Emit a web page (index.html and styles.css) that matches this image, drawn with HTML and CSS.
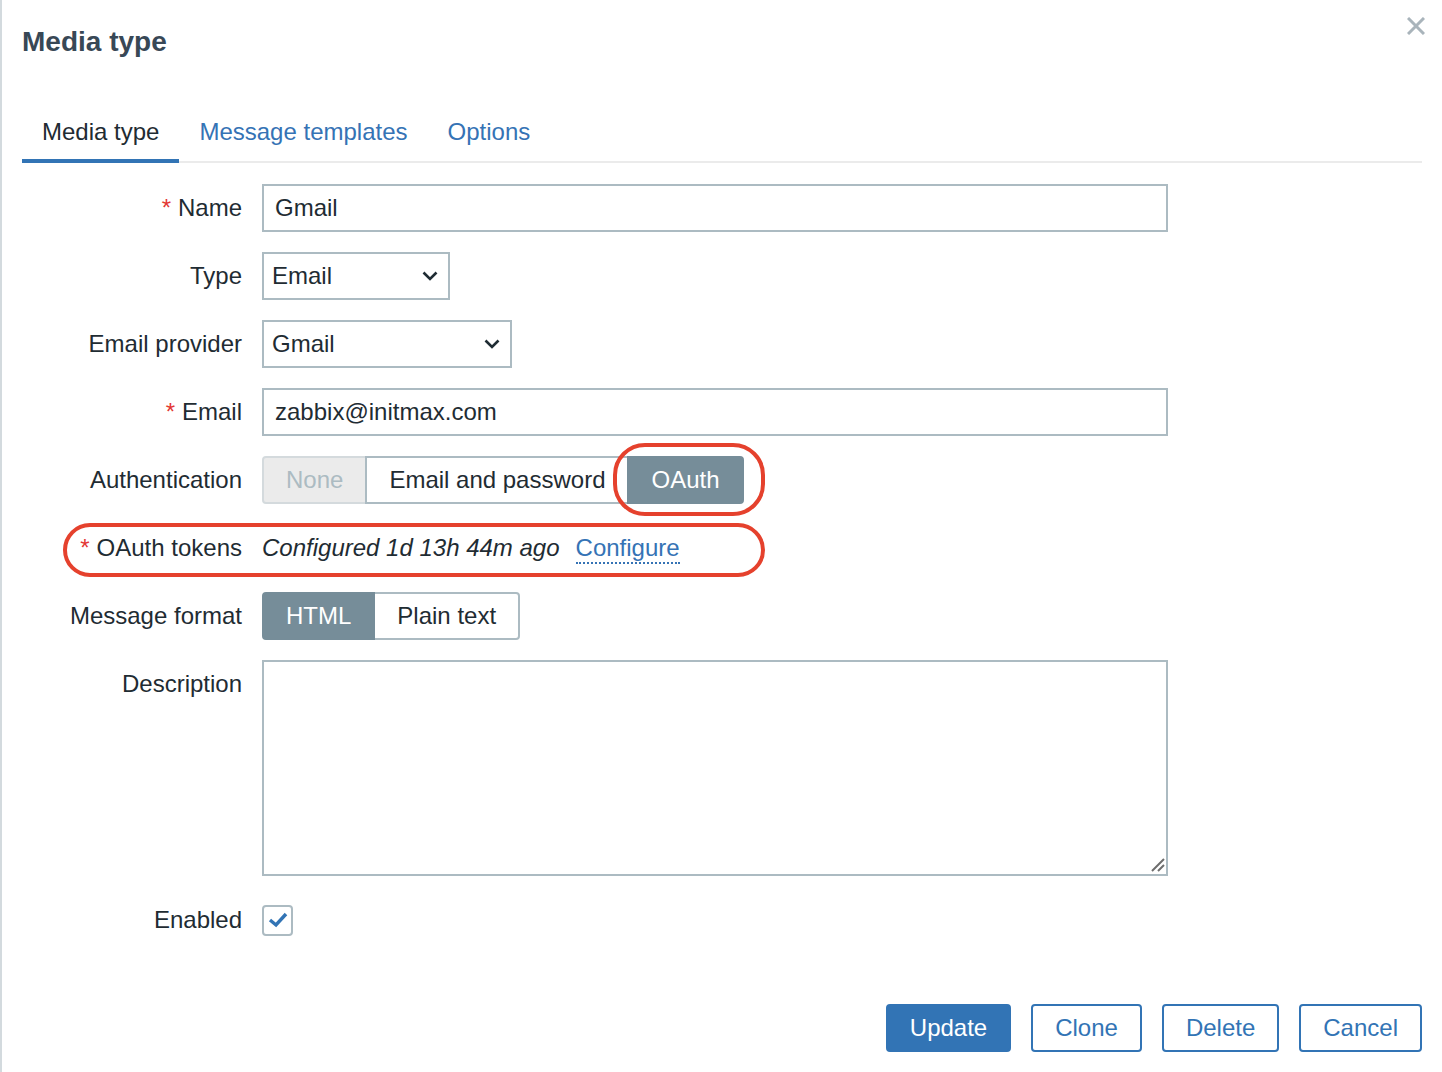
FILE: index.html
```html
<!DOCTYPE html>
<html lang="en">
<head>
    <meta charset="UTF-8">
    <meta name="viewport" content="width=device-width, initial-scale=1.0">
    <title>Media type</title>
    <link rel="stylesheet" href="styles.css">
</head>
<body>

<div class="dialog">
    <div class="dialog-head">
        <h1>Media type</h1>
        <button class="btn-close" type="button" title="Close">
            <svg width="18" height="18" viewBox="0 0 18 18">
                <path d="M1 1 L17 17 M17 1 L1 17" stroke="#a9b4bb" stroke-width="3" fill="none"/>
            </svg>
        </button>
    </div>

    <ul class="tabs">
        <li class="active">Media type</li>
        <li><a href="#">Message templates</a></li>
        <li><a href="#">Options</a></li>
    </ul>

    <form class="form-grid">
        <label class="required">Name</label>
        <div><input class="text-input" type="text" value="Gmail"></div>

        <label>Type</label>
        <div>
            <div class="select select-type">
                <span>Email</span>
                <svg width="16" height="10" viewBox="0 0 16 10"><polyline points="1.5,1.5 8,8 14.5,1.5" stroke="#1f2c33" stroke-width="2.6" fill="none"/></svg>
            </div>
        </div>

        <label>Email provider</label>
        <div>
            <div class="select select-provider">
                <span>Gmail</span>
                <svg width="16" height="10" viewBox="0 0 16 10"><polyline points="1.5,1.5 8,8 14.5,1.5" stroke="#1f2c33" stroke-width="2.6" fill="none"/></svg>
            </div>
        </div>

        <label class="required">Email</label>
        <div><input class="text-input" type="text" value="zabbix@initmax.com"></div>

        <label>Authentication</label>
        <div>
            <ul class="radio-list">
                <li class="disabled">None</li>
                <li>Email and password</li>
                <li class="checked">OAuth</li>
            </ul>
        </div>

        <label class="required">OAuth tokens</label>
        <div class="token-info">
            <em>Configured 1d 13h 44m ago</em>
            <a href="#" class="link-action">Configure</a>
        </div>

        <label>Message format</label>
        <div>
            <ul class="radio-list">
                <li class="checked">HTML</li>
                <li>Plain text</li>
            </ul>
        </div>

        <label>Description</label>
        <div class="area-wrap">
            <textarea class="text-area"></textarea>
            <svg class="grip" width="14" height="14" viewBox="0 0 14 14">
                <path d="M1 13 L13 1 M7 13 L13 7" stroke="#6e6e6e" stroke-width="2" fill="none"/>
            </svg>
        </div>

        <label>Enabled</label>
        <div class="check-cell">
            <span class="checkbox">
                <svg width="20" height="16" viewBox="0 0 20 16"><polyline points="2,8 8,13 18,2" stroke="#3274b5" stroke-width="3.4" fill="none"/></svg>
            </span>
        </div>
    </form>

    <div class="dialog-footer">
        <button type="button" class="btn btn-main">Update</button>
        <button type="button" class="btn btn-alt">Clone</button>
        <button type="button" class="btn btn-alt">Delete</button>
        <button type="button" class="btn btn-alt">Cancel</button>
    </div>

    <!-- red highlight marks drawn over the form -->
    <span class="mark mark-oauth"></span>
    <span class="mark mark-tokens"></span>
</div>

</body>
</html>
```

FILE: styles.css
```css
body {
    margin: 0;
    padding: 0;
    background-color: #fff;
    font-family: "Liberation Sans", Arial, sans-serif;
    font-size: 24px;
    color: #1f2c33;
}
.dialog {
    position: relative;
    box-sizing: border-box;
    min-height: 1072px;
    border-left: 2px solid #d3dade;
    padding: 0 20px;
}
.dialog-head {
    display: flex;
    justify-content: space-between;
    align-items: flex-start;
    padding-top: 17px;
}
.dialog-head h1 {
    margin: 9px 0 0;
    font-size: 28px;
    line-height: 32px;
    font-weight: bold;
    color: #384856;
}
.btn-close {
    background: none;
    border: 0;
    padding: 0;
    margin-right: -3px;
    width: 18px;
    height: 18px;
    cursor: pointer;
}
.btn-close svg {
    display: block;
}

/* tabs */
.tabs {
    display: flex;
    list-style: none;
    margin: 62px 0 0;
    padding: 0;
    border-bottom: 2px solid #ebebeb;
}
.tabs li {
    padding: 0 20px 15px;
    line-height: 24px;
    border-bottom: 4px solid transparent;
    margin-bottom: -2px;
}
.tabs li.active {
    border-bottom-color: #3274b5;
    color: #1f2c33;
}
.tabs a {
    color: #3573b5;
    text-decoration: none;
}

/* form */
.form-grid {
    display: grid;
    grid-template-columns: 220px 1fr;
    column-gap: 20px;
    row-gap: 20px;
    align-items: start;
    margin-top: 21px;
}
.form-grid label {
    text-align: right;
    line-height: 48px;
    white-space: nowrap;
}
.form-grid label.required::before {
    content: "*";
    color: #e33734;
    margin-right: 7px;
}
.text-input {
    box-sizing: border-box;
    display: block;
    width: 906px;
    height: 48px;
    border: 2px solid #acbbc2;
    border-radius: 0;
    padding: 0 11px;
    font-family: inherit;
    font-size: 24px;
    color: #1f2c33;
    outline: none;
}
.select {
    box-sizing: border-box;
    display: flex;
    justify-content: space-between;
    align-items: center;
    height: 48px;
    border: 2px solid #acbbc2;
    padding: 0 10px 0 8px;
}
.select svg {
    display: block;
}
.select-type {
    width: 188px;
}
.select-provider {
    width: 250px;
}
.radio-list {
    display: inline-flex;
    list-style: none;
    margin: 0;
    padding: 0;
}
.radio-list li {
    box-sizing: border-box;
    height: 48px;
    line-height: 44px;
    padding: 0 22px;
    border: 2px solid #acbbc2;
    margin-left: -2px;
    background-color: #fff;
}
.radio-list li:first-child {
    margin-left: 0;
    border-radius: 4px 0 0 4px;
}
.radio-list li:last-child {
    border-radius: 0 4px 4px 0;
}
.radio-list li.disabled {
    background-color: #ebebeb;
    border-color: #d4dadd;
    color: #acbbc2;
}
.radio-list li.checked {
    background-color: #768d99;
    border-color: #768d99;
    color: #fff;
    position: relative;
}
.token-info {
    display: flex;
    align-items: baseline;
    gap: 16px;
    line-height: 48px;
}
.link-action {
    color: #3573b5;
    text-decoration: none;
    border-bottom: 2px dotted #3573b5;
    line-height: normal;
}
.area-wrap {
    position: relative;
    width: 906px;
}
.text-area {
    box-sizing: border-box;
    display: block;
    width: 906px;
    height: 216px;
    border: 2px solid #acbbc2;
    border-radius: 0;
    padding: 8px 11px;
    font-family: inherit;
    font-size: 24px;
    outline: none;
    resize: none;
}
.grip {
    position: absolute;
    right: 3px;
    bottom: 4px;
}
.check-cell {
    height: 48px;
    display: flex;
    align-items: center;
}
.checkbox {
    box-sizing: border-box;
    width: 31px;
    height: 31px;
    border: 2px solid #acbbc2;
    border-radius: 4px;
    display: flex;
    align-items: center;
    justify-content: center;
}
.checkbox svg {
    display: block;
}

/* footer buttons */
.dialog-footer {
    display: flex;
    justify-content: flex-end;
    gap: 20px;
    margin-top: 60px;
}
.btn {
    box-sizing: border-box;
    height: 48px;
    padding: 0 22px;
    border: 2px solid #3274b5;
    border-radius: 4px;
    font-family: inherit;
    font-size: 24px;
    cursor: pointer;
}
.btn-main {
    background-color: #3274b5;
    color: #fff;
}
.btn-alt {
    background-color: #fff;
    color: #3274b5;
}

/* highlight rings */
.mark {
    position: absolute;
    box-sizing: border-box;
    border: 4px solid #e5412d;
    pointer-events: none;
}
.mark-oauth {
    left: 611px;
    top: 443px;
    width: 152px;
    height: 73px;
    border-radius: 32px;
}
.mark-tokens {
    left: 61px;
    top: 523px;
    width: 702px;
    height: 54px;
    border-radius: 27px;
}
```
